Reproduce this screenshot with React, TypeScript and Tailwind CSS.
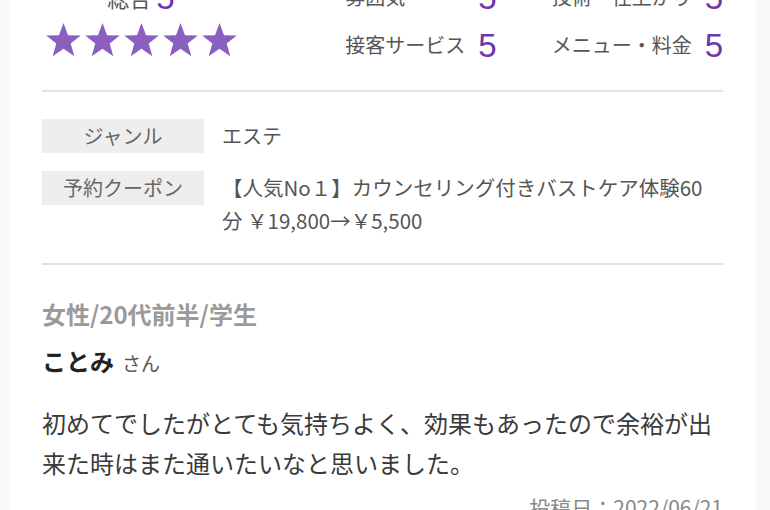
const FONT = { fontFamily: '"Noto Sans CJK JP", "Noto Sans", sans-serif' };
const NUM = { fontFamily: '"Liberation Sans", Arial, sans-serif' };

function Star() {
  return (
    <svg viewBox="0 0 100 100" className="w-[37px] h-[36px]">
      <polygon
        points="50,3 62.5,36.5 98,37.5 70,59.5 80,95 50,74.5 20,95 30,59.5 2,37.5 37.5,36.5"
        fill="#8b5fc0"
      />
    </svg>
  );
}

const scoresA = [
  { label: "雰囲気", score: 5 },
  { label: "接客サービス", score: 5 },
];
const scoresB = [
  { label: "技術・仕上がり", score: 5 },
  { label: "メニュー・料金", score: 5 },
];

function ScoreCol({ items, labelW }: { items: { label: string; score: number }[]; labelW: string }) {
  return (
    <div className={`grid ${labelW} auto-rows-[48px] items-center`}>
      {items.map((it) => (
        <div key={it.label} className="contents">
          <span className="text-[20px] text-[#595555] whitespace-nowrap">{it.label}</span>
          <span className="text-[33px] leading-none text-[#6a38ad]" style={NUM}>
            {it.score}
          </span>
        </div>
      ))}
    </div>
  );
}

export default function App() {
  return (
    <div className="min-h-screen bg-[#f8f8f8] pl-[9px] pr-[14px] overflow-hidden" style={FONT}>
      <div className="bg-white px-[33px] min-h-screen">
        {/* scores */}
        <div className="-mt-[27px] flex justify-between items-start pb-[21px]">
          <div className="ml-[2px] w-[194px] flex flex-col items-center">
            <div className="h-[48px] flex items-center gap-[5px]">
              <span className="text-[22px] text-[#595555]">総合</span>
              <span className="text-[33px] leading-none text-[#6a38ad]" style={NUM}>
                5
              </span>
            </div>
            <div className="mt-[1px] flex gap-[2px]">
              {[0, 1, 2, 3, 4].map((i) => (
                <Star key={i} />
              ))}
            </div>
          </div>
          <div className="flex gap-[55px]">
            <ScoreCol items={scoresA} labelW="grid-cols-[133px_auto]" />
            <ScoreCol items={scoresB} labelW="grid-cols-[153px_auto]" />
          </div>
        </div>

        <div className="h-[2px] bg-[#e2e2e2]" />

        {/* info */}
        <div className="pt-[27px] pb-[26px] flex flex-col gap-[18px]">
          <div className="flex gap-[18px]">
            <div className="w-[162px] h-[34px] shrink-0 bg-[#eeeeee] flex items-center justify-center text-[20px] text-[#666]">
              ジャンル
            </div>
            <div className="text-[20px] leading-[33px] text-[#555]">エステ</div>
          </div>
          <div className="flex gap-[18px]">
            <div className="w-[162px] h-[34px] shrink-0 bg-[#eeeeee] flex items-center justify-center text-[20px] text-[#666]">
              予約クーポン
            </div>
            <div className="max-w-[490px] text-[20.5px] leading-[33px] text-[#555]">
              【人気No１】カウンセリング付きバストケア体験60分 ￥19,800→￥5,500
            </div>
          </div>
        </div>

        <div className="h-[2px] bg-[#e2e2e2]" />

        {/* review */}
        <div className="pt-[31px]">
          <div className="text-[24px] leading-[36px] font-semibold text-[#9a9a9a]">女性/20代前半/学生</div>
          <div className="mt-[11px] leading-[36px]">
            <span className="text-[24px] font-bold text-[#222]">ことみ</span>
            <span className="ml-[8px] text-[19px] text-[#555]">さん</span>
          </div>
          <p className="mt-[21px] text-[24px] leading-[40px] text-[#3a3a3a]">
            初めてでしたがとても気持ちよく、効果もあったので余裕が出来た時はまた通いたいなと思いました。
          </p>
          <div className="mt-[9px] text-right text-[21px] leading-[30px] text-[#888]">投稿日：2022/06/21</div>
        </div>
      </div>
    </div>
  );
}
